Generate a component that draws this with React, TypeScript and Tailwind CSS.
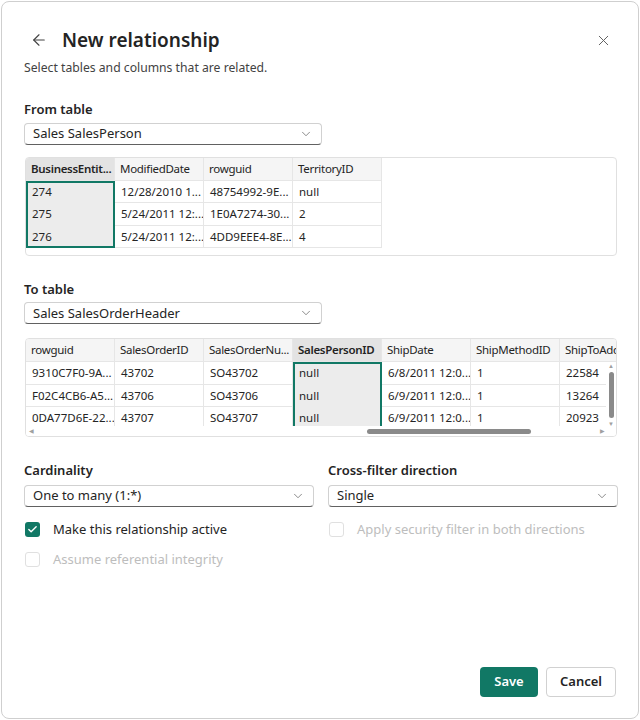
import { ArrowLeft, X, Check, ChevronDown } from "lucide-react";

type Grid = {
  columns: string[];
  rows: string[][];
  selected: number;
};

const fromGrid: Grid = {
  columns: ["BusinessEntit...", "ModifiedDate", "rowguid", "TerritoryID"],
  rows: [
    ["274", "12/28/2010 1...", "48754992-9E...", "null"],
    ["275", "5/24/2011 12:...", "1E0A7274-30...", "2"],
    ["276", "5/24/2011 12:...", "4DD9EEE4-8E...", "4"],
  ],
  selected: 0,
};

const toGrid: Grid = {
  columns: ["rowguid", "SalesOrderID", "SalesOrderNu...", "SalesPersonID", "ShipDate", "ShipMethodID", "ShipToAdd"],
  rows: [
    ["9310C7F0-9A...", "43702", "SO43702", "null", "6/8/2011 12:0...", "1", "22584"],
    ["F02C4CB6-A5...", "43706", "SO43706", "null", "6/9/2011 12:0...", "1", "13264"],
    ["0DA77D6E-22...", "43707", "SO43707", "null", "6/9/2011 12:0...", "1", "20923"],
  ],
  selected: 3,
};

function Select({ value, className }: { value: string; className?: string }) {
  return (
    <div
      className={`flex h-[22px] items-center justify-between rounded-[4px] border border-[#d1d1d1] border-b-[#616161] bg-white pl-[8px] pr-[8px] text-[13px] text-[#242424] ${className ?? ""}`}
    >
      <span>{value}</span>
      <ChevronDown size={14} strokeWidth={1.25} className="text-[#616161]" />
    </div>
  );
}

function DataGrid({ grid, scroll }: { grid: Grid; scroll?: boolean }) {
  return (
    <div className="relative h-[99px] w-[592px] overflow-hidden rounded-[4px] border border-[#e0e0e0] bg-white text-[11.5px] text-[#242424]">
      <div className="flex">
        {grid.columns.map((c, i) => (
          <div
            key={c}
            className={`h-[23px] w-[89px] shrink-0 overflow-hidden border-b border-r border-[#e6e6e6] pl-[5px] leading-[22px] tracking-[-0.3px] whitespace-nowrap ${
              i === grid.selected ? "bg-[#e3e3e3] font-semibold" : "bg-[#f5f5f5]"
            }`}
          >
            {c}
          </div>
        ))}
      </div>
      <div className="flex">
        {grid.columns.map((c, i) => (
          <div
            key={c}
            className={`w-[89px] shrink-0 ${i === grid.selected ? "bg-[#ececec] ring-2 ring-inset ring-[#117865]" : ""}`}
          >
            {grid.rows.map((r, j) => (
              <div
                key={j}
                className={`h-[22.5px] overflow-hidden whitespace-nowrap pl-[6px] leading-[22px] ${
                  i === grid.selected ? "" : "border-b border-r border-[#e6e6e6]"
                }`}
              >
                {r[i]}
              </div>
            ))}
          </div>
        ))}
      </div>
      {scroll ? (
        <>
          {/* vertical scrollbar */}
          <div className="absolute right-0 top-[23px] flex h-[66px] w-[10px] flex-col items-center justify-between bg-white py-[1px]">
            <span className="text-[6px] leading-[6px] text-[#a0a0a0]">▲</span>
            <div className="h-[46px] w-[5px] rounded-full bg-[#8a8a8a]" />
            <span className="text-[6px] leading-[6px] text-[#a0a0a0]">▼</span>
          </div>
          {/* horizontal scrollbar */}
          <div className="absolute bottom-0 left-0 flex h-[10px] w-full items-center bg-white px-[3px]">
            <span className="text-[6px] text-[#a0a0a0]">◀</span>
            <div className="ml-[333px] h-[5px] w-[164px] rounded-full bg-[#8a8a8a]" />
            <span className="ml-auto mr-[8px] text-[6px] text-[#a0a0a0]">▶</span>
          </div>
        </>
      ) : null}
    </div>
  );
}

function CheckRow({ label, checked, disabled }: { label: string; checked?: boolean; disabled?: boolean }) {
  return (
    <div className="flex h-[18px] items-center gap-[13px] pl-[1px]">
      {checked ? (
        <span className="flex h-[15px] w-[15px] items-center justify-center rounded-[3px] bg-[#117865]">
          <Check size={11} strokeWidth={3} className="text-white" />
        </span>
      ) : (
        <span className="h-[15px] w-[15px] rounded-[3px] border border-[#e0e0e0] bg-white" />
      )}
      <span className={`text-[13px] ${disabled ? "text-[#bdbdbd]" : "text-[#242424]"}`}>{label}</span>
    </div>
  );
}

export default function App() {
  return (
    <div className="h-[720px] w-[640px] bg-white p-px" style={{ fontFamily: '"Noto Sans", "Open Sans", sans-serif' }}>
      <div className="relative flex h-full flex-col rounded-lg border border-[#cfcfcf] bg-white pl-[22px] pr-[22px]">
        <div className="mt-[24px] flex h-[28px] items-center">
          <ArrowLeft size={18} strokeWidth={1.5} className="ml-[6px] text-[#424242]" />
          <h1 className="ml-[14px] text-[19px] font-semibold text-[#242424]">New relationship</h1>
          <X size={17} strokeWidth={1.4} className="ml-auto mr-[4px] text-[#616161]" />
        </div>
        <p className="mt-[5px] text-[12.2px] text-[#424242]">Select tables and columns that are related.</p>

        <p className="mt-[23px] text-[13px] font-semibold text-[#242424]">From table</p>
        <Select value="Sales SalesPerson" className="mt-[3px] w-[298px]" />
        <div className="mt-[12px] pl-px">
          <DataGrid grid={fromGrid} />
        </div>

        <p className="mt-[24px] text-[13px] font-semibold text-[#242424]">To table</p>
        <Select value="Sales SalesOrderHeader" className="mt-[3px] w-[298px]" />
        <div className="mt-[14px] pl-px">
          <DataGrid grid={toGrid} scroll />
        </div>

        <div className="mt-[24px] grid grid-cols-[290px_290px] gap-x-[14px]">
          <div>
            <p className="text-[13px] font-semibold text-[#242424]">Cardinality</p>
            <Select value="One to many (1:*)" className="mt-[4px]" />
            <div className="mt-[14px] flex flex-col gap-[12px]">
              <CheckRow label="Make this relationship active" checked />
              <CheckRow label="Assume referential integrity" disabled />
            </div>
          </div>
          <div>
            <p className="text-[13px] font-semibold text-[#242424]">Cross-filter direction</p>
            <Select value="Single" className="mt-[4px]" />
            <div className="mt-[14px]">
              <CheckRow label="Apply security filter in both directions" disabled />
            </div>
          </div>
        </div>

        <div className="mb-[21px] mt-auto flex justify-end gap-[8px]">
          <button className="h-[30px] w-[58px] rounded-[4px] bg-[#117865] text-[13px] font-semibold text-white">Save</button>
          <button className="h-[30px] w-[70px] rounded-[4px] border border-[#d1d1d1] bg-white text-[13px] font-semibold text-[#242424]">
            Cancel
          </button>
        </div>
      </div>
    </div>
  );
}
